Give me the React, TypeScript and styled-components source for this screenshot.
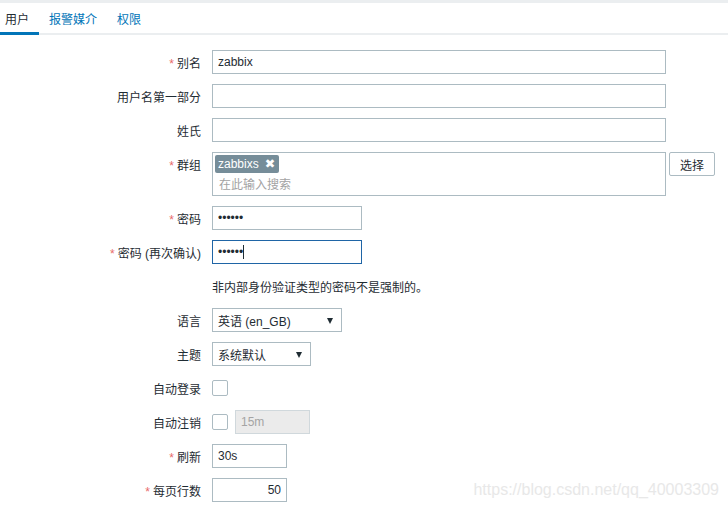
import React from "react";
import styled, { createGlobalStyle, css } from "styled-components";

const GlobalStyle = createGlobalStyle`
  html, body { margin: 0; padding: 0; background: #ffffff; }
  body {
    font-family: "Liberation Sans", Arial, "Noto Sans CJK SC", sans-serif;
    font-size: 12px;
    color: #1f2c33;
  }
  * { box-sizing: border-box; }
`;

const Page = styled.div`
  position: relative;
  width: 728px;
  height: 508px;
  overflow: hidden;
  background: #fff;
`;

const TopStrip = styled.div`
  height: 3px;
  background: #ebeef0;
`;

const TabBar = styled.div`
  display: flex;
  height: 32px;
  border-bottom: 2px solid #ebeef0;
`;

const Tab = styled.div<{ $active?: boolean; $first?: boolean }>`
  display: flex;
  align-items: center;
  height: 32px;
  padding: 0 10px;
  padding-left: ${(p) => (p.$first ? "5px" : "10px")};
  margin-bottom: -2px;
  color: ${(p) => (p.$active ? "#1f2c33" : "#0275b8")};
  border-bottom: 3px solid ${(p) => (p.$active ? "#0275b8" : "transparent")};
  padding-top: 1px;
`;

const Form = styled.div`
  display: grid;
  grid-template-columns: 201px 1fr;
  column-gap: 11px;
  row-gap: 10px;
  padding-top: 15px;
`;

const Label = styled.div`
  display: flex;
  justify-content: flex-end;
  align-items: center;
  height: 24px;
  align-self: start;
  white-space: nowrap;
`;

const Req = styled.span`
  color: #e86a6a;
  margin-right: 3px;
  font-size: 12px;
  position: relative;
  top: 2px;
`;

const Field = styled.div`
  display: flex;
  align-items: center;
  gap: 7px;
  min-height: 24px;
`;

const inputBase = css`
  height: 24px;
  border: 1px solid #acbbc2;
  background: #fff;
  font-family: "Liberation Sans", Arial, "Noto Sans CJK SC", sans-serif;
  font-size: 12px;
  color: #1f2c33;
  padding: 0 5px;
  outline: none;
  border-radius: 0;
`;

const TextInput = styled.input<{ $w: number; $right?: boolean; $focused?: boolean }>`
  ${inputBase};
  width: ${(p) => p.$w}px;
  text-align: ${(p) => (p.$right ? "right" : "left")};
  border-color: ${(p) => (p.$focused ? "#1f65a6" : "#acbbc2")};
  &:disabled {
    background: #ebebeb;
    border-color: #d0d8dc;
    color: #a4a4a4;
  }
`;

const CaretWrap = styled.div`
  position: relative;
  display: flex;
`;

const Caret = styled.span`
  position: absolute;
  left: 31px;
  top: 5px;
  width: 1px;
  height: 14px;
  background: #1f2c33;
`;

const MultiSelect = styled.div`
  width: 454px;
  height: 44px;
  border: 1px solid #acbbc2;
  padding: 2px;
  display: flex;
  flex-direction: column;
`;

const TagRow = styled.div`
  display: flex;
  height: 18px;
`;

const Tag = styled.span`
  display: inline-flex;
  align-items: center;
  gap: 6px;
  height: 18px;
  padding: 0 4px 0 3px;
  background: #768d99;
  color: #ffffff;
  border-radius: 2px;
  font-size: 12px;
`;

const TagX = styled.span`
  font-size: 12.5px;
  line-height: 1;
  font-family: "DejaVu Sans", sans-serif;
`;

const Placeholder = styled.div`
  height: 20px;
  display: flex;
  align-items: center;
  padding-left: 4px;
  color: #a3a3a3;
`;

const Button = styled.button`
  align-self: flex-start;
  height: 24px;
  padding: 0 10px;
  margin-left: -4px;
  border: 1px solid #acbbc2;
  border-radius: 2px;
  background: #fff;
  color: #1f2c33;
  font-family: "Liberation Sans", Arial, "Noto Sans CJK SC", sans-serif;
  font-size: 12px;
`;

const GroupField = styled.div`
  display: flex;
  align-items: flex-start;
  gap: 7px;
`;

const Hint = styled.div`
  height: 24px;
  display: flex;
  align-items: center;
`;

const Select = styled.div<{ $w: number }>`
  ${inputBase};
  width: ${(p) => p.$w}px;
  display: flex;
  align-items: center;
  justify-content: space-between;
  padding-right: 8px;
`;

const Arrow = styled.span`
  width: 0;
  height: 0;
  border-left: 3.5px solid transparent;
  border-right: 3.5px solid transparent;
  border-top: 6px solid #1f2c33;
  margin-top: 1px;
`;

const Checkbox = styled.span`
  display: inline-block;
  width: 16px;
  height: 16px;
  border: 1px solid #acbbc2;
  border-radius: 2px;
  background: #fff;
`;

const Watermark = styled.div`
  position: absolute;
  right: 9px;
  bottom: 9px;
  font-family: "Liberation Sans", Arial, sans-serif;
  font-size: 16px;
  color: #e8e8e8;
`;

const Row: React.FC<{ label?: string; req?: boolean; children: React.ReactNode }> = ({
  label,
  req,
  children,
}) => (
  <>
    <Label>
      {req && <Req>*</Req>}
      {label}
    </Label>
    {children}
  </>
);

export default function App() {
  return (
    <>
      <GlobalStyle />
      <Page>
        <TopStrip />
        <TabBar>
          <Tab $active $first>
            用户
          </Tab>
          <Tab>报警媒介</Tab>
          <Tab>权限</Tab>
        </TabBar>
        <Form>
          <Row label="别名" req>
            <Field>
              <TextInput $w={454} defaultValue="zabbix" />
            </Field>
          </Row>
          <Row label="用户名第一部分">
            <Field>
              <TextInput $w={454} defaultValue="" />
            </Field>
          </Row>
          <Row label="姓氏">
            <Field>
              <TextInput $w={454} defaultValue="" />
            </Field>
          </Row>
          <Row label="群组" req>
            <GroupField>
              <MultiSelect>
                <TagRow>
                  <Tag>
                    zabbixs <TagX>✖</TagX>
                  </Tag>
                </TagRow>
                <Placeholder>在此输入搜索</Placeholder>
              </MultiSelect>
              <Button>选择</Button>
            </GroupField>
          </Row>
          <Row label="密码" req>
            <Field>
              <TextInput $w={150} type="password" defaultValue="zabbix" />
            </Field>
          </Row>
          <Row label="密码 (再次确认)" req>
            <Field>
              <CaretWrap>
                <TextInput $w={150} $focused type="password" defaultValue="zabbix" />
                <Caret />
              </CaretWrap>
            </Field>
          </Row>
          <Row>
            <Hint>非内部身份验证类型的密码不是强制的。</Hint>
          </Row>
          <Row label="语言">
            <Field>
              <Select $w={130}>
                <span>英语 (en_GB)</span>
                <Arrow />
              </Select>
            </Field>
          </Row>
          <Row label="主题">
            <Field>
              <Select $w={99}>
                <span>系统默认</span>
                <Arrow />
              </Select>
            </Field>
          </Row>
          <Row label="自动登录">
            <Field>
              <Checkbox />
            </Field>
          </Row>
          <Row label="自动注销">
            <Field>
              <Checkbox />
              <TextInput $w={75} disabled defaultValue="15m" />
            </Field>
          </Row>
          <Row label="刷新" req>
            <Field>
              <TextInput $w={75} defaultValue="30s" />
            </Field>
          </Row>
          <Row label="每页行数" req>
            <Field>
              <TextInput $w={75} $right defaultValue="50" />
            </Field>
          </Row>
        </Form>
        <Watermark>https://blog.csdn.net/qq_40003309</Watermark>
      </Page>
    </>
  );
}
